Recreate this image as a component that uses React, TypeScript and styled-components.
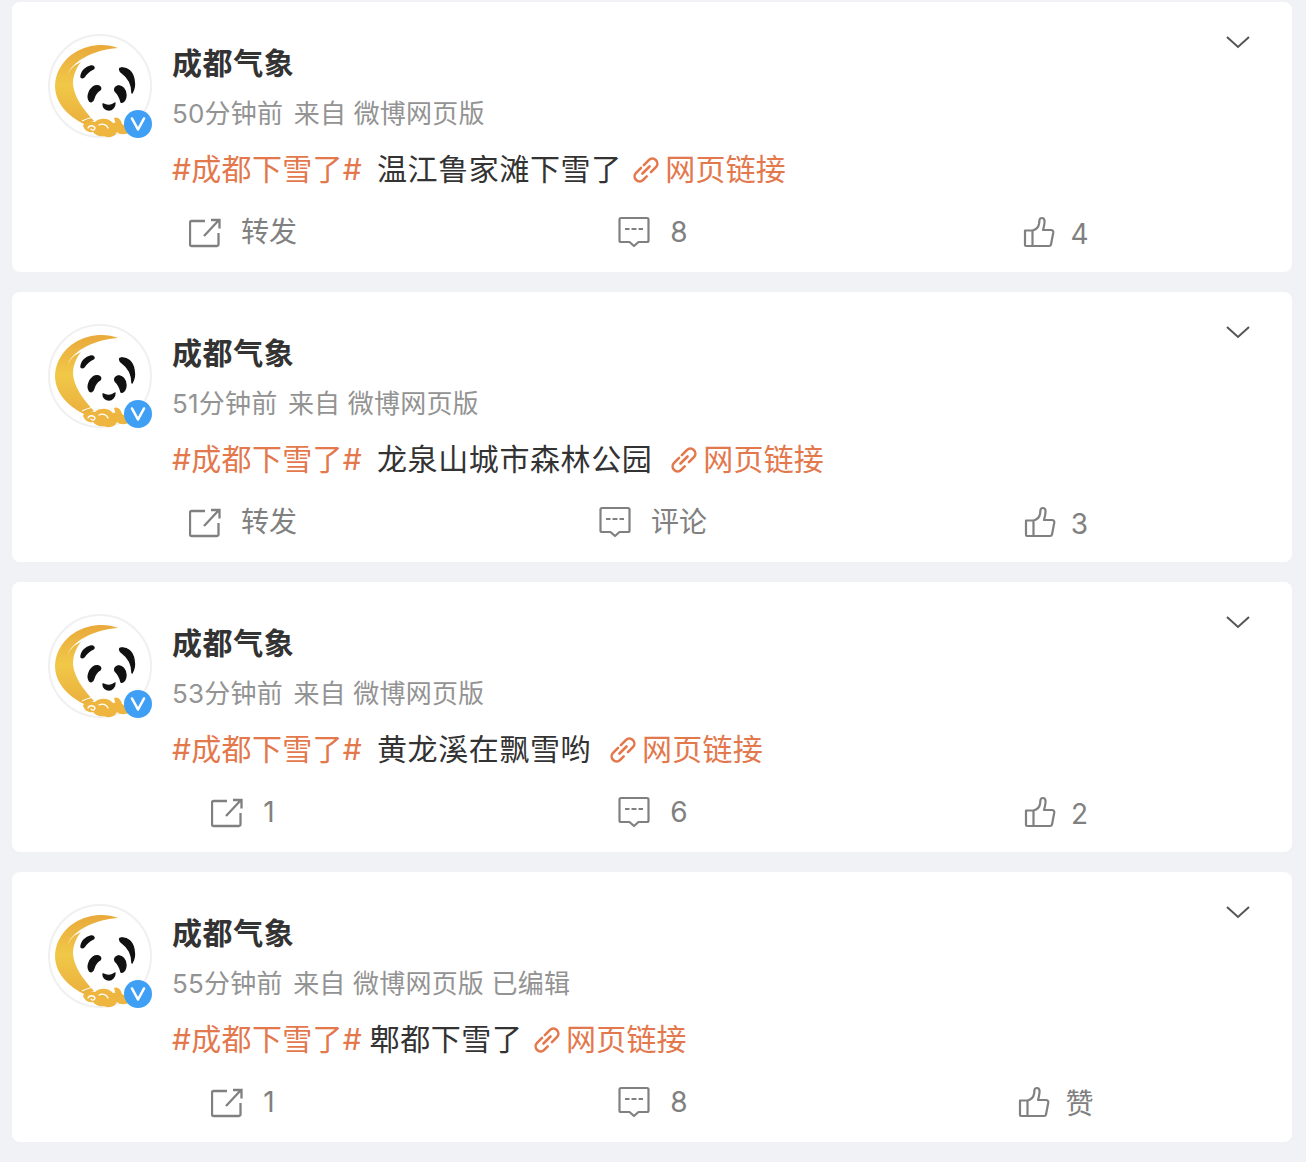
import React from 'react';
import styled, { createGlobalStyle } from 'styled-components';

type Post = {
  time: string;
  text: string;
  edited?: boolean;
  repost: string;
  comment: string;
  like: string;
};

const posts: Post[] = [
  { time: '50分钟前', text: '  温江鲁家滩下雪了 ', repost: '转发', comment: '8', like: '4' },
  { time: '51分钟前', text: '  龙泉山城市森林公园  ', repost: '转发', comment: '评论', like: '3' },
  { time: '53分钟前', text: '  黄龙溪在飘雪哟  ', repost: '1', comment: '6', like: '2' },
  { time: '55分钟前', text: ' 郫都下雪了 ', edited: true, repost: '1', comment: '8', like: '赞' },
];

const Avatar = () => (
  <AvatarBox>
    <svg width="104" height="104" viewBox="0 0 104 104">
      <defs>
        <linearGradient id="moon" x1="0.5" y1="0" x2="0.5" y2="1">
          <stop offset="0" stopColor="#e9a93b" />
          <stop offset="0.5" stopColor="#f1c848" />
          <stop offset="1" stopColor="#eab03e" />
        </linearGradient>
      </defs>
      <circle cx="52" cy="52" r="51" fill="#fff" stroke="#f0f0f0" strokeWidth="2" />
      <path
        d="M70 14C50 6 16 14 8 44c-4 16 4 34 28 46l10-3C35 75 26 63 25 50c0-8 3-16 8-22-7 3-11 7-13 13 2-11 22-25 50-27z"
        fill="url(#moon)"
      />
      {/* face */}
      <g fill="#111" stroke="#111" strokeWidth="1.400" strokeLinejoin="round">
        <path d="M33 43c0-6 5-10 10-11 3 0 4 2 2 3-5 2-7 5-9 8-1 1-3 1-3 0z" />
        <path d="M73 34c6-1 12 4 13 12 1 5 0 10-2 13 0-7-3-15-10-20-3-2-3-5-1-5z" />
        <path d="M47 52c4-1 7 1 5 4-3 2-5 4-6 8-1 4-4 5-5 2-2-4 0-11 6-14z" />
        <path d="M70 52c4-1 8 4 8 9 0 4-2 8-5 7-1-5-3-8-6-11-1-2 0-4 3-5z" />
        <path d="M55 70c4 2 8 2 12-1 0 4-3 7-6 7-3 0-6-2-6-6z" />
      </g>
      {/* cloud */}
      <path
        d="M35 92c2-5 8-5 12-4 5-5 14-4 18 1 6-2 13 2 17 9-4 3-10 3-13 0-2 4-7 7-13 4-4 1-9-1-11-4-4 1-8-1-10-6z"
        fill="#eeb53f"
      />
      <path d="M66 84c4-2 8 2 8 8l-6-1z" fill="#eeb53f" />
      <path d="M40 94c1-3 6-3 7 0 0 2-3 3-4 1M51 91c4-2 8 0 9 3" fill="none" stroke="#fff" strokeWidth="1.300" strokeLinecap="round" />
      <path d="M34 87c10-5 22-5 32-2" fill="none" stroke="#fff" strokeWidth="1.100" />
    </svg>
    <Badge>
      <svg width="28" height="28" viewBox="0 0 28 28">
        <path d="M8 8.500l6 11 6-11" fill="none" stroke="#fff" strokeWidth="2.600" strokeLinecap="round" strokeLinejoin="round" />
      </svg>
    </Badge>
  </AvatarBox>
);

const Chevron = () => (
  <ChevronIcon width="24" height="14" viewBox="0 0 24 14">
    <path d="M1 2l11 10L23 2" fill="none" stroke="#555" strokeWidth="2" />
  </ChevronIcon>
);

const LinkIcon = () => (
  <LinkGlyph width="28" height="28" viewBox="0 0 28 28">
    <g fill="none" stroke="#e3784d" strokeWidth="2.600" strokeLinecap="round" transform="rotate(-45 14 14)">
      <path d="M12 9H5a5 5 0 0 0 0 10h5" />
      <path d="M16 9h7a5 5 0 0 1 0 10h-7" />
      <path d="M9 14h10" />
    </g>
  </LinkGlyph>
);

const RepostIcon = () => (
  <svg width="32" height="32" viewBox="0 0 32 32">
    <path
      d="M16 5H2.500A1.500 1.500 0 0 0 1 6.500V28.500A1.500 1.500 0 0 0 2.500 30H28a1.500 1.500 0 0 0 1.500-1.500V17M15 20L29.500 4.500M22 4h8.500v8.500"
      fill="none"
      stroke="#808080"
      strokeWidth="2.300"
    />
  </svg>
);

const CommentIcon = () => (
  <svg width="32" height="32" viewBox="0 0 32 32">
    <path
      d="M3 2h26a1.500 1.500 0 0 1 1.500 1.500v21a1.500 1.500 0 0 1-1.500 1.500h-8.500L16 30l-4.500-4H3A1.500 1.500 0 0 1 1.500 24.500V3.500A1.500 1.500 0 0 1 3 2z"
      fill="none"
      stroke="#808080"
      strokeWidth="2.200"
      strokeLinejoin="round"
    />
    <path d="M7 13h4.500M13.500 13h5M20.500 13h4.500" stroke="#808080" strokeWidth="2.200" />
  </svg>
);

const ThumbIcon = () => (
  <svg width="32" height="32" viewBox="0 0 32 32">
    <path
      d="M2 14.500h7.500V30H3a1 1 0 0 1-1-1V14.500zM9.500 14.500c3.500-1 6-3.500 6.500-6.500l.5-4c.300-2.500 4.500-3 5 .5.300 2.500-.5 6-1.500 9.500h8c1.500 0 2.500 1 2.300 2.500l-2.300 12c-.2 1-1 1.500-2 1.500H9.500"
      fill="none"
      stroke="#808080"
      strokeWidth="2.200"
      strokeLinejoin="round"
    />
  </svg>
);

const App = () => (
  <Page>
    <GlobalStyle />
    {posts.map((post) => (
      <Card key={post.time}>
        <Header>
          <Avatar />
          <Info>
            <Name>成都气象</Name>
            <Meta>
              <Time>{post.time}</Time> 来自 微博网页版{post.edited ? ' 已编辑' : ''}
            </Meta>
          </Info>
          <Chevron />
        </Header>
        <Content>
          <Topic>#成都下雪了#</Topic>
          {post.text}
          <LinkText>
            <LinkIcon />
            网页链接
          </LinkText>
        </Content>
        <Footer>
          <Action>
            <RepostIcon />
            <Label>{post.repost}</Label>
          </Action>
          <Action>
            <CommentIcon />
            <Label>{post.comment}</Label>
          </Action>
          <Action $like>
            <ThumbIcon />
            <Label>{post.like}</Label>
          </Action>
        </Footer>
      </Card>
    ))}
  </Page>
);

export default App;

const GlobalStyle = createGlobalStyle`
  body {
    margin: 0;
    background: #f1f2f5;
    font-family: Inter, "Noto Sans CJK SC", sans-serif;
  }
`;

const Page = styled.div`
  display: flex;
  flex-direction: column;
  gap: 20px;
  padding: 2px 14px 20px 12px;
`;

const Card = styled.div`
  height: 270px;
  box-sizing: border-box;
  padding: 32px 42px 20px 36px;
  background: #fff;
  border-radius: 8px;
`;

const Header = styled.div`
  display: flex;
  align-items: flex-start;
`;

const AvatarBox = styled.div`
  position: relative;
  width: 104px;
  height: 104px;
  flex: none;
`;

const Badge = styled.div`
  position: absolute;
  right: 0;
  bottom: 0;
  width: 28px;
  height: 28px;
  border-radius: 50%;
  background: #3f9ff5;
  svg {
    display: block;
  }
`;

const Info = styled.div`
  margin: 9px 0 0 20px;
`;

const Name = styled.div`
  font-size: 30px;
  line-height: 40px;
  font-weight: 700;
  letter-spacing: 0.6px;
  color: #333;
`;

const Meta = styled.div`
  margin-top: 13px;
  font-size: 26px;
  line-height: 36px;
  letter-spacing: 0.2px;
  color: #939393;
  white-space: pre;
`;

const Time = styled.span`
  margin-right: 3px;
`;

const ChevronIcon = styled.svg`
  flex: none;
  margin: 1px 0 0 auto;
`;

const Content = styled.div`
  margin: 11px 0 0 124px;
  font-size: 30px;
  line-height: 40px;
  letter-spacing: 0.6px;
  word-spacing: -1.6px;
  color: #333;
  white-space: pre;
`;

const Topic = styled.span`
  color: #e3784d;
  letter-spacing: 0.3px;
`;

const LinkText = styled.span`
  color: #e3784d;
  letter-spacing: 0.2px;
`;

const LinkGlyph = styled.svg`
  margin: 0 5px 0 3px;
  vertical-align: -4px;
`;

const Footer = styled.div`
  display: grid;
  grid-template-columns: 410px 410px 396px;
  margin: 21px 0 0 -10px;
  height: 40px;
`;

const Action = styled.div<{ $like?: boolean }>`
  display: flex;
  align-items: center;
  justify-content: center;
  gap: ${(p) => (p.$like ? '15px' : '20px')};
  svg {
    display: block;
    margin-top: ${(p) => (p.$like ? '-4px' : '0')};
  }
  ${(p) => p.$like && 'padding-top: 4px;'}
`;

const Label = styled.span`
  font-size: 28px;
  line-height: 40px;
  color: #808080;
`;
